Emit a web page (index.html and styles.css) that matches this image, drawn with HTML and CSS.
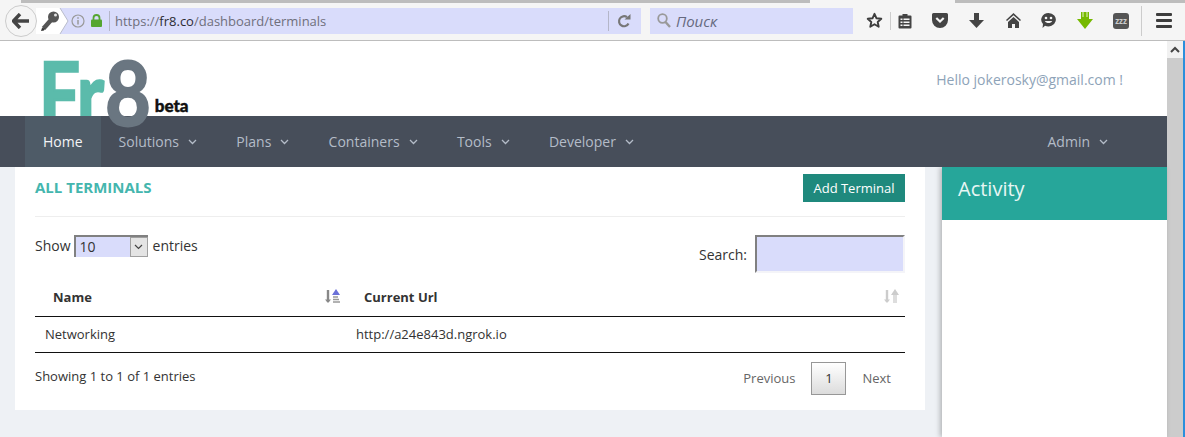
FILE: index.html
```html
<!DOCTYPE html>
<html lang="en">
<head>
    <meta charset="UTF-8">
    <title>Fr8 - Terminals</title>
    <link rel="stylesheet" href="styles.css">
</head>
<body>
    <div class="tabstrip">
        <span class="tab-gap-a"></span>
        <span class="tab-line-a"></span>
        <span class="tab-gap-b"></span>
        <span class="tab-line-b"></span>
    </div>
    <div class="toolbar">
        <div class="back">
            <svg width="18" height="16" viewBox="0 0 18 16"><path d="M8 1 1.500 8 8 15M2 8h15" fill="none" stroke="#444" stroke-width="3.400"/></svg>
        </div>
        <div class="urlbar">
            <div class="identity">
                <svg width="34" height="26" viewBox="0 0 34 26">
                    <path d="M0 0h24l8 13-8 13H0z" fill="#fff"/>
                    <path d="M24 0l8 13-8 13" fill="none" stroke="#b9bccb"/>
                    <path d="M15.500 11.500L7.500 20.500" stroke="#555" stroke-width="4.500"/>
                    <circle cx="17.500" cy="9" r="5.500" fill="#555"/>
                    <path d="M6 20l-1 3 3-.5 1-2z" fill="#333"/>
                    <circle cx="19.500" cy="7" r="1.500" fill="#e4e4e4"/>
                </svg>
            </div>
            <svg class="info" width="14" height="14" viewBox="0 0 14 14">
                <circle cx="7" cy="7" r="6" fill="none" stroke="#999" stroke-width="1.200"/>
                <path d="M7 6v4.500M7 3.200v1.500" stroke="#999" stroke-width="1.500"/>
            </svg>
            <svg class="lock" width="11" height="13" viewBox="0 0 11 13">
                <path d="M2.500 6V4a3 3 0 0 1 6 0v2" fill="none" stroke="#55a630" stroke-width="1.800"/>
                <rect y="5.500" width="11" height="7.500" rx="1" fill="#55a630"/>
            </svg>
            <span class="bar-sep"></span>
            <span class="url">https://<b>fr8.co</b>/dashboard/terminals</span>
            <span class="bar-sep bar-sep-right"></span>
            <svg class="reload" width="14" height="14" viewBox="0 0 14 14">
                <path d="M11.500 9.500A5 5 0 1 1 10 3.200" fill="none" stroke="#777" stroke-width="2.200"/>
                <path d="M7.500 5.500h6V0z" fill="#777"/>
            </svg>
        </div>
        <div class="searchbar">
            <svg width="14" height="15" viewBox="0 0 14 15">
                <circle cx="5.500" cy="5.500" r="4.300" fill="none" stroke="#999" stroke-width="1.800"/>
                <path d="M8.500 9l4.500 5" stroke="#999" stroke-width="2.400"/>
            </svg>
            <span>Поиск</span>
        </div>
        <div class="tools">
            <svg class="t-star" width="17" height="17" viewBox="0 0 17 17"><path d="M8.500 1.800l2 4.500 4.800.5-3.600 3.200 1 4.800-4.200-2.500-4.200 2.500 1-4.800L1.700 6.800l4.800-.5z" fill="none" stroke="#3d3d3d" stroke-width="1.900" stroke-linejoin="round"/></svg>
            <span class="tool-sep"></span>
            <svg class="t-clip" width="14" height="16" viewBox="0 0 14 16"><path d="M1.500 2.500h3V1h5v1.500h3a1 1 0 0 1 1 1v11a1 1 0 0 1-1 1h-11a1 1 0 0 1-1-1v-11a1 1 0 0 1 1-1z" fill="#444"/><path d="M2.500 5.500h2v1.500h-2zM5.500 5.500h6v1.500h-6zM2.500 8.500h2V10h-2zM5.500 8.500h6V10h-6zM2.500 11.500h2V13h-2zM5.500 11.500h6V13h-6z" fill="#f5f5f5"/></svg>
            <svg class="t-pocket" width="16" height="15" viewBox="0 0 16 15"><path d="M1.500 0h13A1.500 1.500 0 0 1 16 1.500V7A8 8 0 0 1 0 7V1.500A1.500 1.500 0 0 1 1.500 0z" fill="#444"/><path d="M4.300 5l3.700 3.500L11.700 5" fill="none" stroke="#f5f5f5" stroke-width="2.200"/></svg>
            <svg class="t-down" width="15" height="15" viewBox="0 0 15 15"><path d="M5 0h5v7h5l-7.500 8L0 7h5z" fill="#444"/></svg>
            <svg class="t-home" width="15" height="15" viewBox="0 0 15 15"><path d="M7.500 0L15 7l-1 1-6.500-5.800L1 8 0 7z" fill="#444"/><path d="M7.500 4L13 9v6H9v-4H6v4H2V9z" fill="#444"/></svg>
            <svg class="t-smile" width="15" height="15" viewBox="0 0 15 15"><path d="M7.500 0a7.500 6.700 0 1 1-3.500 12.700L1.500 15 2 11A7.500 6.700 0 0 1 7.500 0z" fill="#444"/><circle cx="5" cy="5" r="1.300" fill="#f5f5f5"/><circle cx="10" cy="5" r="1.300" fill="#f5f5f5"/><path d="M3.800 8c1.500 2.700 6 2.700 7.400 0z" fill="#f5f5f5"/></svg>
            <svg class="t-green" width="16" height="18" viewBox="0 0 16 18"><path d="M4 7V0H12V7H16L8 17 0 7z" fill="#76b900"/><path d="M6 0v5M10 0v5" stroke="#e6f3c8" stroke-width="1"/></svg>
            <div class="t-zzz">zzz</div>
            <span class="tool-sep tool-sep-last"></span>
            <div class="t-menu"><i></i><i></i><i></i></div>
        </div>
    </div>

    <div class="page">
        <div class="main">
            <header class="header">
                <div class="hello">Hello jokerosky@gmail.com !</div>
            </header>
            <div class="logo">
                <span class="logo-fr">Fr</span><span class="logo-8">8</span><span class="logo-beta">beta</span>
            </div>
            <nav class="nav">
                <a class="nav-item active">Home</a>
                <a class="nav-item">Solutions<svg class="chev" width="9" height="6" viewBox="0 0 9 6"><path d="M1 1l3.500 3.500L8 1" fill="none" stroke="#b4bcc8" stroke-width="1.300"/></svg></a>
                <a class="nav-item">Plans<svg class="chev" width="9" height="6" viewBox="0 0 9 6"><path d="M1 1l3.500 3.500L8 1" fill="none" stroke="#b4bcc8" stroke-width="1.300"/></svg></a>
                <a class="nav-item">Containers<svg class="chev" width="9" height="6" viewBox="0 0 9 6"><path d="M1 1l3.500 3.500L8 1" fill="none" stroke="#b4bcc8" stroke-width="1.300"/></svg></a>
                <a class="nav-item">Tools<svg class="chev" width="9" height="6" viewBox="0 0 9 6"><path d="M1 1l3.500 3.500L8 1" fill="none" stroke="#b4bcc8" stroke-width="1.300"/></svg></a>
                <a class="nav-item">Developer<svg class="chev" width="9" height="6" viewBox="0 0 9 6"><path d="M1 1l3.500 3.500L8 1" fill="none" stroke="#b4bcc8" stroke-width="1.300"/></svg></a>
                <a class="nav-item nav-admin">Admin<svg class="chev" width="9" height="6" viewBox="0 0 9 6"><path d="M1 1l3.500 3.500L8 1" fill="none" stroke="#b4bcc8" stroke-width="1.300"/></svg></a>
            </nav>
            <div class="content">
                <section class="card">
                    <div class="card-title">
                        <h2>ALL TERMINALS</h2>
                        <button class="add-btn">Add Terminal</button>
                    </div>
                    <div class="controls">
                        <div class="show">
                            Show
                            <div class="select">
                                <select><option>10</option></select>
                                <span class="select-btn"><svg width="9" height="6" viewBox="0 0 9 6"><path d="M1 1l3.500 3.500L8 1" fill="none" stroke="#444" stroke-width="1.200"/></svg></span>
                            </div>
                            entries
                        </div>
                        <label class="search">Search: <input type="text"></label>
                    </div>
                    <table class="grid">
                        <thead>
                            <tr>
                                <th class="col-name">
                                    <div class="th-in">Name
                                        <svg width="16" height="15" viewBox="0 0 16 15">
                                            <path d="M3 1v12" stroke="#888" stroke-width="2.400"/><path d="M0 10.500l3 3.500 3-3.500z" fill="#888"/>
                                            <path d="M8 8h5M8 10.500h6M8 13h7" stroke="#999" stroke-width="1.500"/>
                                            <path d="M11 0l4 6H7z" fill="#6a70d8"/>
                                        </svg>
                                    </div>
                                </th>
                                <th>
                                    <div class="th-in">Current Url
                                        <svg width="16" height="15" viewBox="0 0 16 15">
                                            <path d="M3 1v12" stroke="#ccc" stroke-width="2.400"/><path d="M0 10.500l3 3.500 3-3.500z" fill="#ccc"/>
                                            <path d="M9 6h4v8h-4z" fill="#ddd"/>
                                            <path d="M11 0l4 6H7z" fill="#ccc"/>
                                        </svg>
                                    </div>
                                </th>
                            </tr>
                        </thead>
                        <tbody>
                            <tr>
                                <td>Networking</td>
                                <td>http://a24e843d.ngrok.io</td>
                            </tr>
                        </tbody>
                    </table>
                    <div class="card-foot">
                        <div class="info-text">Showing 1 to 1 of 1 entries</div>
                        <div class="pager">
                            <a>Previous</a>
                            <a class="current">1</a>
                            <a>Next</a>
                        </div>
                    </div>
                </section>
                <aside class="panel">
                    <div class="panel-head">Activity</div>
                </aside>
            </div>
        </div>
        <div class="scrollbar">
            <div class="scroll-up"><svg width="10" height="7" viewBox="0 0 10 7"><path d="M1 6l4-4 4 4" fill="none" stroke="#444" stroke-width="2"/></svg></div>
            <div class="scroll-thumb"></div>
        </div>
    </div>
</body>
</html>
```

FILE: styles.css
```css
* {
    box-sizing: border-box;
}

html, body {
    height: 100%;
}

body {
    margin: 0;
    overflow: hidden;
    background-color: #eef1f5;
    font-family: "Open Sans", sans-serif;
    font-size: 13px;
    color: #333;
}

/* browser chrome */
.tabstrip {
    display: flex;
    height: 3px;
    background-color: #f5f5f5;
}

.tab-gap-a { width: 21px; }
.tab-line-a { width: 789px; background-color: #bdbdbd; }
.tab-gap-b { width: 145px; }
.tab-line-b { flex: 1; background-color: #bdbdbd; }

.toolbar {
    display: flex;
    align-items: center;
    height: 38px;
    padding: 0 0 2px 5px;
    background-color: #f5f5f5;
    border-bottom: 1px solid #bdbdbd;
}

.back {
    position: relative;
    z-index: 1;
    display: flex;
    align-items: center;
    justify-content: center;
    width: 32px;
    height: 32px;
    margin-right: -1px;
    background-color: #f5f5f5;
    border: 1px solid #ccc;
    border-radius: 50%;
}

.urlbar {
    display: flex;
    align-items: center;
    width: 605px;
    height: 26px;
    background-color: #d9dcfb;
}

.identity {
    display: flex;
    width: 34px;
    height: 26px;
}

.info {
    margin-left: 1px;
}

.lock {
    margin-left: 6px;
}

.bar-sep {
    width: 1px;
    height: 20px;
    margin-left: 7px;
    background-color: #b4b6c8;
}

.url {
    margin-left: 5px;
    width: 293px;
    font-size: 13px;
    color: #6f6f7c;
    white-space: nowrap;
}

.url b {
    font-weight: 400;
    color: #2c2c33;
}

.bar-sep-right {
    margin-left: auto;
    transform: translateX(1px);
}

.reload {
    margin: 0 10px 0 9px;
}

.searchbar {
    display: flex;
    align-items: center;
    gap: 5px;
    width: 203px;
    height: 26px;
    margin-left: 9px;
    padding-left: 7px;
    background-color: #d9dcfb;
    font-style: italic;
    font-size: 15px;
    color: #666a80;
}

.tools {
    display: flex;
    align-items: center;
    flex: 1;
    padding-left: 13px;
}

.tool-sep {
    width: 1px;
    height: 18px;
    margin: 0 7px 0 7px;
    background-color: #ccc;
}

.t-pocket { margin-left: 20px; }
.t-down { margin-left: 21px; }
.t-home { margin-left: 22px; }
.t-smile { margin-left: 20px; }
.t-green { margin-left: 21px; }

.t-zzz {
    width: 16px;
    height: 16px;
    margin-left: 20px;
    background-color: #555;
    border-radius: 3px;
    font-size: 8px;
    font-weight: 700;
    line-height: 15px;
    text-align: center;
    color: #ccc;
}

.tool-sep-last {
    height: 30px;
    margin: 0 14px 0 12px;
}

.t-menu {
    display: flex;
    flex-direction: column;
    gap: 3px;
    width: 16px;
}

.t-menu i {
    height: 3px;
    border-radius: 1px;
    background-color: #3d3d3d;
}

/* page */
.page {
    display: flex;
    height: 396px;
}

.main {
    position: relative;
    display: flex;
    flex-direction: column;
    width: 1167px;
}

.header {
    position: relative;
    height: 75px;
    background-color: #fff;
}

.hello {
    position: absolute;
    top: 29px;
    right: 44px;
    font-size: 14px;
    color: #8ea3b8;
}

.logo {
    position: absolute;
    top: 1px;
    left: 39px;
    display: flex;
    align-items: baseline;
    font-family: "Lato", sans-serif;
    line-height: 100px;
    white-space: nowrap;
}

.logo-fr {
    margin-right: -13px;
    font-size: 88px;
    font-weight: 700;
    color: #5bbbab;
    -webkit-text-stroke: 2.500px #5bbbab;
    transform: scaleX(0.82);
    transform-origin: left;
}

.logo-8 {
    position: relative;
    z-index: 3;
    margin-right: -7px;
    font-size: 89px;
    font-weight: 700;
    color: #6a7681;
    -webkit-text-stroke: 2px #6a7681;
    transform: scaleX(0.89);
    transform-origin: left;
}

.logo-beta {
    position: relative;
    top: -14px;
    z-index: 3;
    margin-left: 5px;
    font-size: 17px;
    font-weight: 900;
    color: #111;
    -webkit-text-stroke: 0.4px #111;
}

.nav {
    position: relative;
    z-index: 2;
    display: flex;
    height: 51px;
    padding-left: 25px;
    background-color: #474e5a;
}

.nav-item {
    display: flex;
    align-items: center;
    padding: 0 21.3px 0 18px;
    font-size: 14px;
    color: #b4bcc8;
}

.nav-item.active {
    padding-right: 18px;
    background-color: #4e5b67;
    color: #f2f4f6;
}

.nav-admin {
    margin-left: auto;
    padding-right: 59px;
}

.chev {
    margin-left: 9px;
}

.content {
    display: flex;
    flex: 1;
    gap: 17px;
    padding-left: 15px;
}

.card {
    align-self: flex-start;
    width: 910px;
    padding: 7px 20px 15px;
    background-color: #fff;
}

.card-title {
    display: flex;
    align-items: flex-start;
    justify-content: space-between;
    padding-bottom: 14px;
    border-bottom: 1px solid #eee;
}

.card-title h2 {
    margin: 3px 0 0;
    font-size: 15px;
    font-weight: 700;
    line-height: 20px;
    color: #44b6ae;
}

.add-btn {
    width: 102px;
    height: 28px;
    padding: 0;
    border: 0;
    background-color: #1f897d;
    font-family: inherit;
    font-size: 13px;
    color: #fff;
}

.controls {
    display: flex;
    justify-content: space-between;
    margin-top: 18px;
}

.show {
    display: flex;
    align-items: center;
    gap: 3px;
    height: 21px;
    font-size: 14px;
}

.select {
    display: flex;
    flex: none;
    width: 74px;
    height: 22px;
    margin-right: 2px;
    background-color: #f4f4f8;
    border-top: 2px solid #808080;
    border-left: 2px solid #808080;
}

.select select {
    flex: 1;
    width: 50px;
    padding: 0 0 0 4px;
    border: 0;
    appearance: none;
    background-color: #d9dcfb;
    font-family: inherit;
    font-size: 14px;
    color: #333;
}

.select-btn {
    display: flex;
    align-items: center;
    justify-content: center;
    width: 18px;
    background-color: #e4e4e4;
    border: 1px solid #a0a0a0;
}

.search {
    display: flex;
    align-items: center;
    gap: 8px;
    font-size: 14px;
}

.search input {
    width: 150px;
    height: 38px;
    padding: 0;
    background-color: #d9dcfb;
    border-style: solid;
    border-width: 2px 2px 2px 2px;
    border-color: #808080 #f4f4f8 #f4f4f8 #808080;
}

.grid {
    width: 100%;
    margin-top: 5px;
    border-collapse: collapse;
    table-layout: fixed;
}

.grid th {
    height: 38px;
    padding: 0 5px 0 18px;
    border-bottom: 1px solid #111;
    font-size: 13px;
    font-weight: 700;
    text-align: left;
}

.th-in {
    display: flex;
    align-items: center;
    justify-content: space-between;
}

.col-name {
    width: 311px;
}

.grid td {
    height: 36px;
    padding: 0 0 0 10px;
    border-bottom: 1px solid #111;
    font-size: 13px;
}

.card-foot {
    display: flex;
    justify-content: space-between;
    margin-top: 9px;
}

.info-text {
    margin-top: 5px;
}

.pager {
    display: flex;
    align-items: center;
    gap: 16px;
    padding-right: 14px;
    color: #666;
}

.pager .current {
    width: 35px;
    height: 33px;
    border: 1px solid #979797;
    background: linear-gradient(#fff, #dcdcdc);
    line-height: 31px;
    text-align: center;
    color: #333;
}

.panel {
    width: 225px;
    background-color: #fff;
    box-shadow: -2px 0 5px rgba(0, 0, 0, 0.25);
}

.panel-head {
    height: 53px;
    padding-left: 16px;
    background-color: #26a69a;
    font-size: 20px;
    line-height: 44px;
    color: #e8f6f4;
}

.scrollbar {
    width: 18px;
    border-right: 2px solid #2b8fdc;
    background-color: #fff;
}

.scroll-up {
    display: flex;
    align-items: center;
    justify-content: center;
    height: 17px;
    background-color: #f1f1f1;
}

.scroll-thumb {
    height: 379px;
    background-color: #ccc;
}
```
